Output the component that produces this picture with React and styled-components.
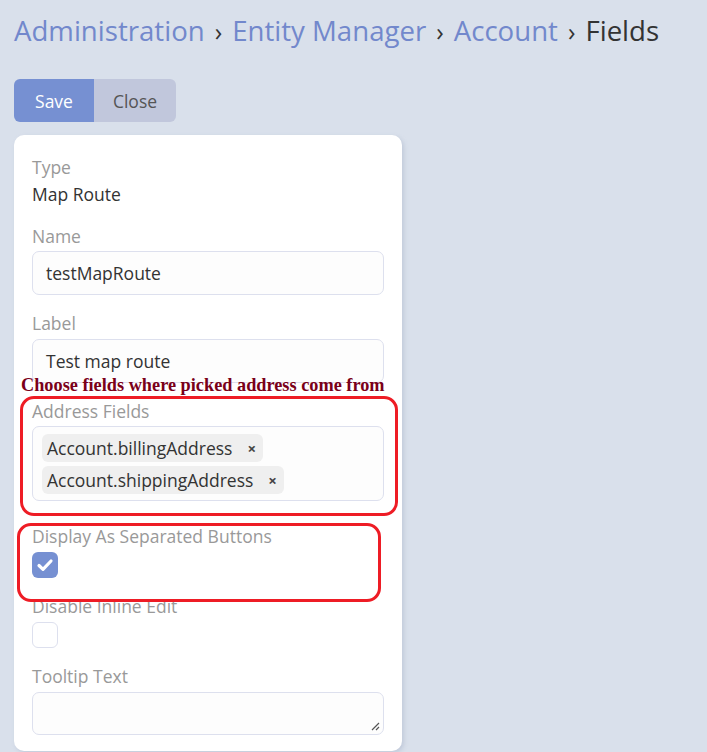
import styled, { createGlobalStyle } from 'styled-components'

const GlobalStyle = createGlobalStyle`
  body {
    margin: 0;
    background: #d9e0eb;
    font-family: 'Open Sans', 'Liberation Sans', sans-serif;
    color: #333;
  }
`
const Page = styled.div`
  width: 707px;
  height: 752px;
  overflow: hidden;
  padding: 0 14px;
  box-sizing: border-box;
  position: relative;
`
const Breadcrumbs = styled.h1`
  margin: 0;
  padding-top: 11px;
  font-size: 27.6px;
  font-weight: 400;
  line-height: 38px;
  color: #333;
  white-space: nowrap;
`
const Crumb = styled.span`
  color: ${({ $current }) => ($current ? '#333' : '#7288cc')};
`
const Sep = styled.span`
  color: #333;
  margin: 0 10px;
  font-size: 25px;
`
const ButtonGroup = styled.div`
  display: flex;
  margin-top: 29px;
`
const Btn = styled.button`
  height: 43px;
  border: none;
  font-family: inherit;
  font-size: 17.5px;
  padding: 0;
  width: ${({ $primary }) => ($primary ? '80px' : '82px')};
  background: ${({ $primary }) => ($primary ? '#7690d2' : '#c1c7dc')};
  color: ${({ $primary }) => ($primary ? '#fff' : '#555')};
  border-radius: ${({ $primary }) => ($primary ? '6px 0 0 6px' : '0 6px 6px 0')};
`
const Card = styled.div`
  margin-top: 13px;
  width: 388px;
  background: #fff;
  border-radius: 10px;
  box-shadow: 2px 2px 4px rgba(150, 160, 185, 0.35);
  padding: 20px 18px 16px;
  box-sizing: border-box;
  display: flex;
  flex-direction: column;
`
const Field = styled.div`
  display: flex;
  flex-direction: column;
  margin-bottom: ${({ $gap }) => ($gap === undefined ? 16 : $gap)}px;
`
const Label = styled.div`
  font-size: 17.5px;
  line-height: 25px;
  color: #999;
  margin-bottom: ${({ $mb }) => ($mb === undefined ? 2 : $mb)}px;
`
const Value = styled.div`
  font-size: 17.5px;
  line-height: 24px;
  color: #333;
`
const Input = styled.div`
  height: 44px;
  box-sizing: border-box;
  border: 1px solid #dde0ee;
  border-radius: 7px;
  background: #fdfdfd;
  font-size: 17.5px;
  line-height: 42px;
  padding: 0 13px;
  color: #333;
`
const MultiBox = styled.div`
  border: 1px solid #dde0ee;
  border-radius: 7px;
  background: #fdfdfd;
  padding: 7px 9px 0;
  display: flex;
  flex-direction: column;
  align-items: flex-start;
  gap: 4px;
  height: 75px;
  box-sizing: border-box;
`
const Tag = styled.div`
  background: #efefef;
  border-radius: 6px;
  height: 28px;
  display: flex;
  align-items: center;
  padding: 0 7px 0 5px;
  font-size: 17.5px;
  color: #333;
`
const TagX = styled.span`
  margin-left: 15px;
  font-size: 15px;
  font-weight: 700;
  color: #444;
`
const Check = styled.div`
  width: 26px;
  height: 26px;
  box-sizing: border-box;
  border-radius: 6px;
  background: ${({ $on }) => ($on ? '#7690d2' : '#fff')};
  border: ${({ $on }) => ($on ? 'none' : '1px solid #dde0ee')};
  display: flex;
  align-items: center;
  justify-content: center;
`
const TextArea = styled.div`
  height: 43px;
  box-sizing: border-box;
  border: 1px solid #dde0ee;
  border-radius: 7px;
  background: #fdfdfd;
  position: relative;
`
const Grip = styled.svg`
  position: absolute;
  right: 3px;
  bottom: 3px;
`
const Note = styled.div`
  position: absolute;
  left: 21px;
  top: 374px;
  font-family: 'Liberation Serif', serif;
  font-weight: 700;
  font-size: 18.3px;
  line-height: 22px;
  color: #7a0019;
  white-space: nowrap;
`
const Ring = styled.div`
  position: absolute;
  border: 3px solid #ee1c25;
  border-radius: 14px;
  box-sizing: border-box;
`

export default function App() {
  return (
    <Page>
      <GlobalStyle />
      <Breadcrumbs>
        <Crumb>Administration</Crumb><Sep>›</Sep>
        <Crumb>Entity Manager</Crumb><Sep>›</Sep>
        <Crumb>Account</Crumb><Sep>›</Sep>
        <Crumb $current>Fields</Crumb>
      </Breadcrumbs>
      <ButtonGroup>
        <Btn $primary>Save</Btn>
        <Btn>Close</Btn>
      </ButtonGroup>
      <Card>
        <Field $gap={18}>
          <Label>Type</Label>
          <Value>Map Route</Value>
        </Field>
        <Field>
          <Label>Name</Label>
          <Input>testMapRoute</Input>
        </Field>
        <Field>
          <Label $mb={3}>Label</Label>
          <Input>Test map route</Input>
        </Field>
        <Field $gap={23}>
          <Label>Address Fields</Label>
          <MultiBox>
            <Tag>Account.billingAddress<TagX>×</TagX></Tag>
            <Tag>Account.shippingAddress<TagX>×</TagX></Tag>
          </MultiBox>
        </Field>
        <Field $gap={16}>
          <Label $mb={3}>Display As Separated Buttons</Label>
          <Check $on>
            <svg width="20" height="20" viewBox="0 0 20 20">
              <path d="M4 10.5l4 3.8L16 6" fill="none" stroke="#fff" strokeWidth="3.2" strokeLinecap="round" strokeLinejoin="round" />
            </svg>
          </Check>
        </Field>
        <Field $gap={16}>
          <Label $mb={3}>Disable Inline Edit</Label>
          <Check />
        </Field>
        <Field $gap={0}>
          <Label $mb={3}>Tooltip Text</Label>
          <TextArea>
            <Grip width="10" height="10" viewBox="0 0 10 10">
              <path d="M9 2L2 9M9 6L6 9" stroke="#555" strokeWidth="1.2" />
            </Grip>
          </TextArea>
        </Field>
      </Card>
      <Note>Choose fields where picked address come from</Note>
      <Ring style={{ left: 20, top: 396, width: 378, height: 120 }} />
      <Ring style={{ left: 17, top: 523, width: 364, height: 79 }} />
    </Page>
  )
}
